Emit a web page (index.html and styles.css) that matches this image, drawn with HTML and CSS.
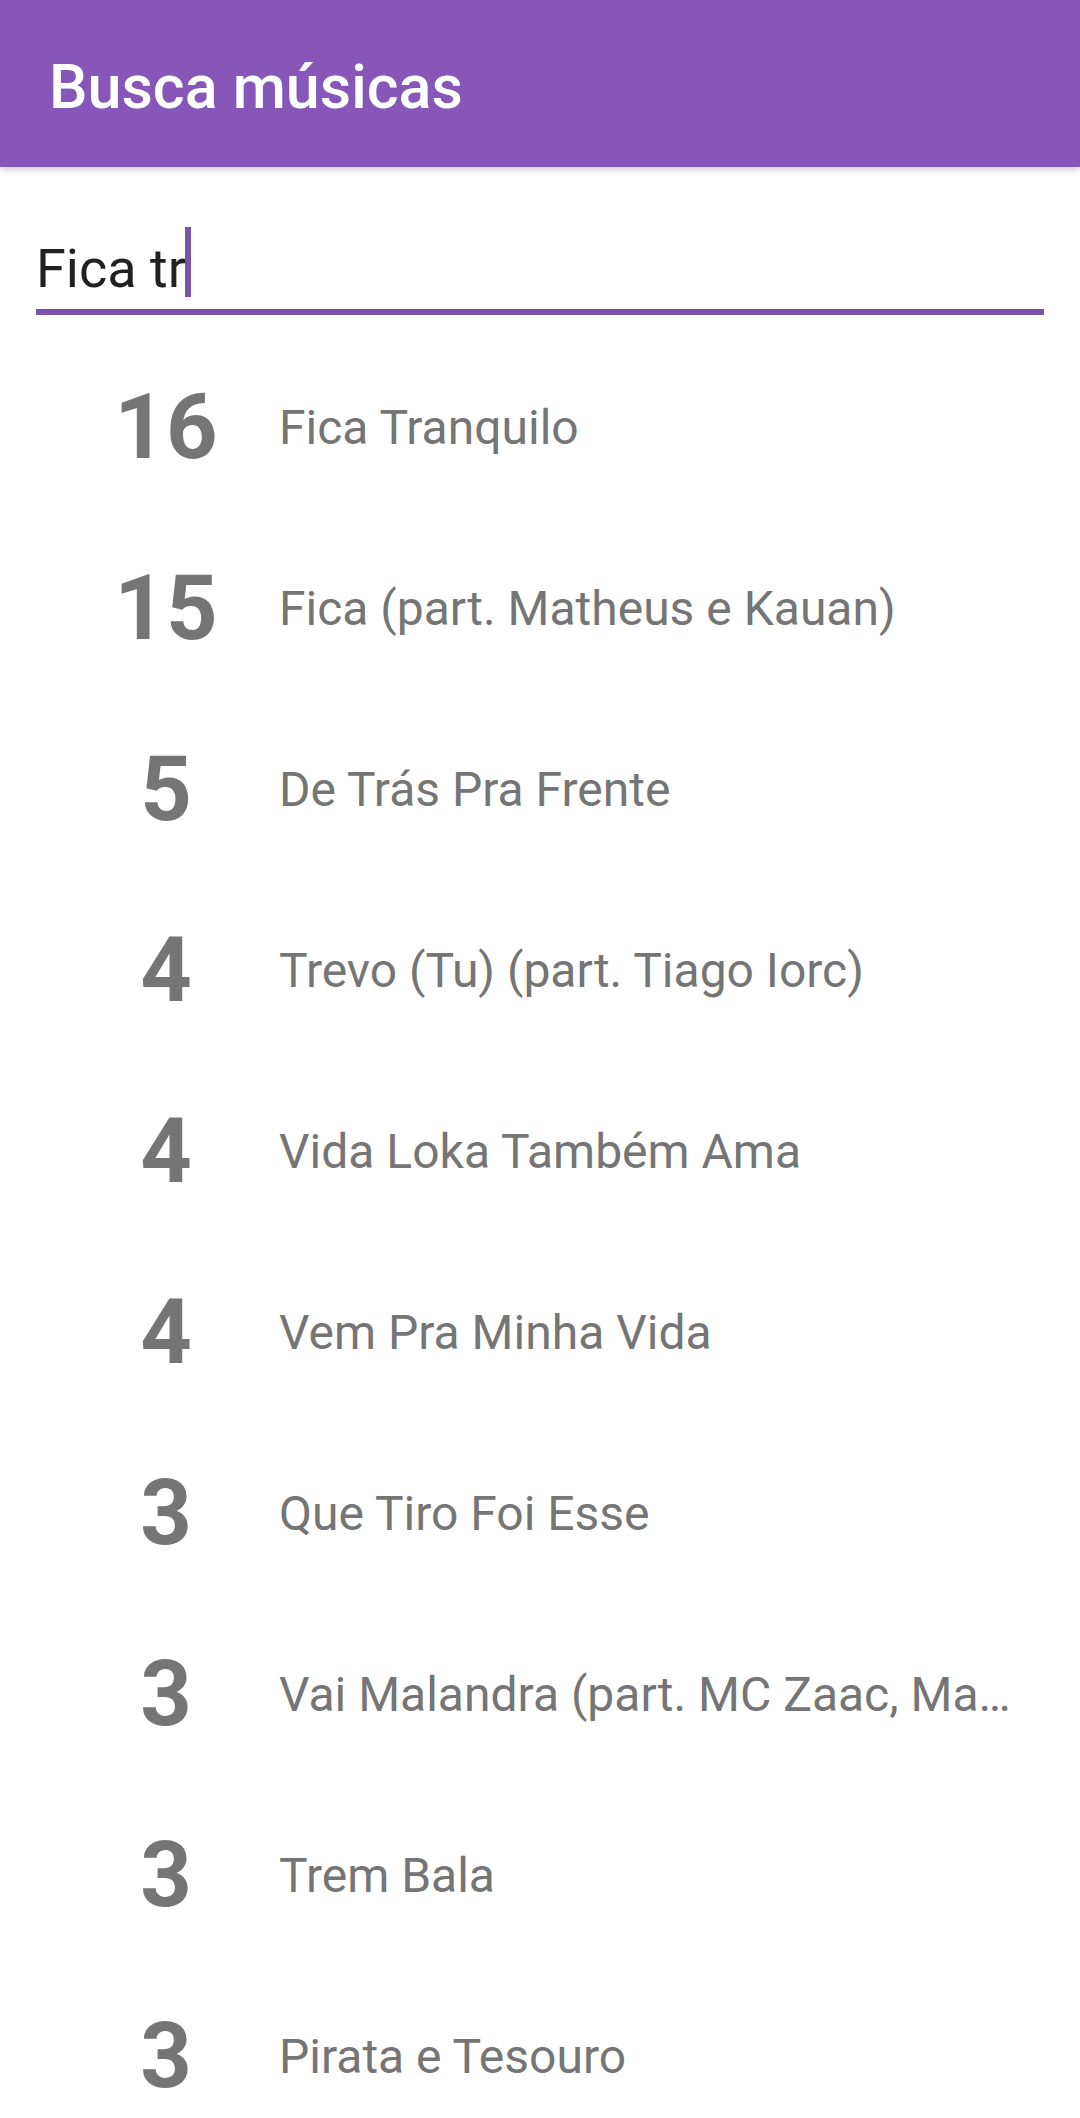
FILE: index.html
```html
<!DOCTYPE html>
<html lang="pt-BR">
<head>
<meta charset="utf-8">
<title>Busca músicas</title>
<link rel="stylesheet" href="styles.css">
</head>
<body>
<header class="appbar">
  <h1 class="appbar-title">Busca músicas</h1>
</header>
<div class="search">
  <span class="search-text">Fica tr</span><span class="caret"></span>
</div>
<ul class="results">
  <li class="row"><span class="num">16</span><span class="title">Fica Tranquilo</span></li>
  <li class="row"><span class="num">15</span><span class="title">Fica (part. Matheus e Kauan)</span></li>
  <li class="row"><span class="num">5</span><span class="title">De Trás Pra Frente</span></li>
  <li class="row"><span class="num">4</span><span class="title">Trevo (Tu) (part. Tiago Iorc)</span></li>
  <li class="row"><span class="num">4</span><span class="title">Vida Loka Também Ama</span></li>
  <li class="row"><span class="num">4</span><span class="title">Vem Pra Minha Vida</span></li>
  <li class="row"><span class="num">3</span><span class="title">Que Tiro Foi Esse</span></li>
  <li class="row"><span class="num">3</span><span class="title">Vai Malandra (part. MC Zaac, Maejor, Tropkillaz e DJ Yuri Martins)</span></li>
  <li class="row"><span class="num">3</span><span class="title">Trem Bala</span></li>
  <li class="row"><span class="num">3</span><span class="title">Pirata e Tesouro</span></li>
</ul>
</body>
</html>
```
FILE: styles.css
```css
html, body {
  margin: 0;
  padding: 0;
  background: #ffffff;
  height: 2118px;
  overflow: hidden;
  font-family: Roboto, "Liberation Sans", sans-serif;
}

.appbar {
  height: 167px;
  box-sizing: border-box;
  padding: 52px 0 0 49px;
  background: #8756b9;
  box-shadow: 0 3px 6px rgba(0, 0, 0, 0.18);
}

.appbar-title {
  margin: 0;
  font-size: 61px;
  line-height: 70px;
  font-weight: 500;
  color: #ffffff;
}

.search {
  display: flex;
  align-items: flex-start;
  margin: 0 36px;
  padding: 70px 0 8px 0;
  border-bottom: 6px solid #7b52ab;
}

.search-text {
  font-size: 54px;
  line-height: 64px;
  color: #212121;
}

.caret {
  width: 6px;
  height: 70px;
  margin-top: -10px;
  margin-left: -1px;
  background: #7b52ab;
}

.results {
  list-style: none;
  margin: 22px 0 0 0;
  padding: 0 56px 0 66px;
}

.row {
  display: flex;
  align-items: center;
  height: 181px;
}

.num {
  flex: 0 0 200px;
  text-align: center;
  font-size: 90px;
  font-weight: 700;
  color: #757575;
}

.title {
  flex: 1 1 auto;
  min-width: 0;
  padding-left: 13px;
  font-size: 48px;
  color: #757575;
  white-space: nowrap;
  overflow: hidden;
  text-overflow: ellipsis;
}
```
